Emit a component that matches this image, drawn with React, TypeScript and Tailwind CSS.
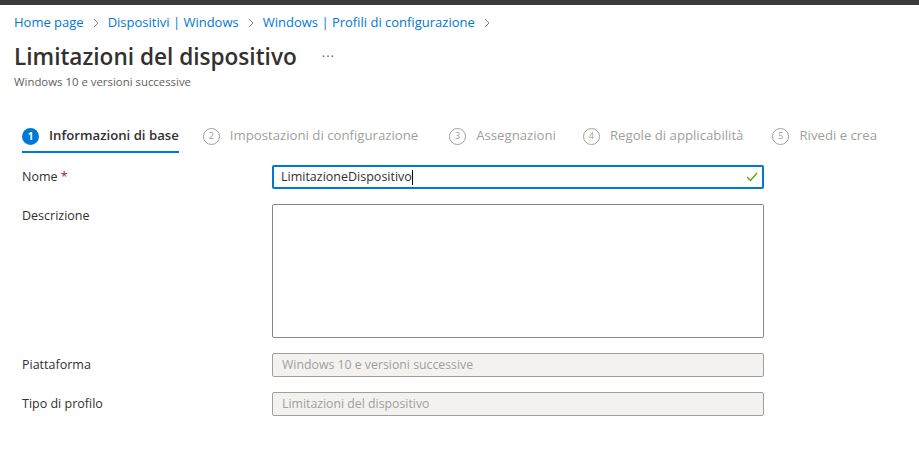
import React from "react";

const Chevron = () => (
  <svg width="8" height="10" viewBox="0 0 8 10" className="mx-[8px]" fill="none">
    <path d="M2 1l4 4-4 4" stroke="#8a8886" strokeWidth="1" />
  </svg>
);

const Step = ({ n, label, active, gap }: { n: number; label: string; active?: boolean; gap: string }) => (
  <div className={`flex flex-col ${gap}`}>
    <div className="flex items-center h-[30px]">
      {active ? (
        <div className="w-[17px] h-[17px] rounded-full bg-[#0078d4] text-white text-[10px] font-bold flex items-center justify-center">
          {n}
        </div>
      ) : (
        <div className="w-[17px] h-[17px] rounded-full border border-[#a19f9d] text-[#a19f9d] text-[9px] flex items-center justify-center">
          {n}
        </div>
      )}
      <span
        className={
          active
            ? "ml-[10px] text-[13.2px] font-semibold text-[#323130]"
            : "ml-[10px] text-[13.2px] text-[#a19f9d]"
        }
      >
        {label}
      </span>
    </div>
    <div className={active ? "h-[2px] bg-[#0078d4]" : "h-[2px]"} />
  </div>
);

export default function App() {
  return (
    <div className="w-[919px] h-[465px] bg-white overflow-hidden font-['Segoe_UI','Open_Sans',sans-serif] text-[#323130]">
      <div className="h-[5px] bg-[#3b3b3b]" />
      <div className="pl-[14px]">
        <div className="flex items-center h-[18px] mt-[9px] text-[13px] text-[#0078d4]">
          <span>Home page</span>
          <Chevron />
          <span>Dispositivi | Windows</span>
          <Chevron />
          <span>Windows | Profili di configurazione</span>
          <Chevron />
        </div>
        <div className="flex items-center h-[32px] mt-[9px]">
          <h1 className="text-[22.6px] font-semibold text-[#323130] leading-none">Limitazioni del dispositivo</h1>
          <span className="ml-[25px] text-[#605e5c] text-[13px] tracking-[1px]">···</span>
        </div>
        <div className="text-[11.4px] text-[#605e5c] h-[16px] leading-[16px] mt-[1px]">Windows 10 e versioni successive</div>
      </div>
      <div className="flex pl-[22px] mt-[31px]">
        <Step n={1} label="Informazioni di base" active gap="mr-[24px]" />
        <Step n={2} label="Impostazioni di configurazione" gap="mr-[31px]" />
        <Step n={3} label="Assegnazioni" gap="mr-[27px]" />
        <Step n={4} label="Regole di applicabilità" gap="mr-[29px]" />
        <Step n={5} label="Rivedi e crea" gap="" />
      </div>
      <div className="pl-[22px] mt-[12px] text-[12.5px]">
        <div className="flex items-center h-[24px]">
          <div className="w-[250px]">
            Nome <span className="text-[#a4262c]">*</span>
          </div>
          <div className="w-[492px] h-[24px] border-2 border-[#0078d4] rounded-[2px] flex items-center pl-[7px] pr-[4px]">
            <span className="flex-1 text-[#323130]">
              LimitazioneDispositivo<span className="inline-block w-[1px] h-[15px] bg-black align-middle" />
            </span>
            <svg width="12" height="10" viewBox="0 0 12 10" fill="none">
              <path d="M1 5l3.5 3.5 6.5-7.5" stroke="#57a300" strokeWidth="1.2" />
            </svg>
          </div>
        </div>
        <div className="flex items-start mt-[15px]">
          <div className="w-[250px] mt-[3px]">Descrizione</div>
          <div className="w-[492px] h-[134px] border border-[#8a8886] rounded-[2px]" />
        </div>
        <div className="flex items-center h-[24px] mt-[15px]">
          <div className="w-[250px]">Piattaforma</div>
          <div className="w-[492px] h-[24px] border border-[#a19f9d] bg-[#f3f2f1] rounded-[2px] flex items-center px-[9px] text-[12.3px] text-[#a19f9d]">
            Windows 10 e versioni successive
          </div>
        </div>
        <div className="flex items-center h-[24px] mt-[15px]">
          <div className="w-[250px]">Tipo di profilo</div>
          <div className="w-[492px] h-[24px] border border-[#a19f9d] bg-[#f3f2f1] rounded-[2px] flex items-center px-[9px] text-[12.3px] text-[#a19f9d]">
            Limitazioni del dispositivo
          </div>
        </div>
      </div>
    </div>
  );
}
